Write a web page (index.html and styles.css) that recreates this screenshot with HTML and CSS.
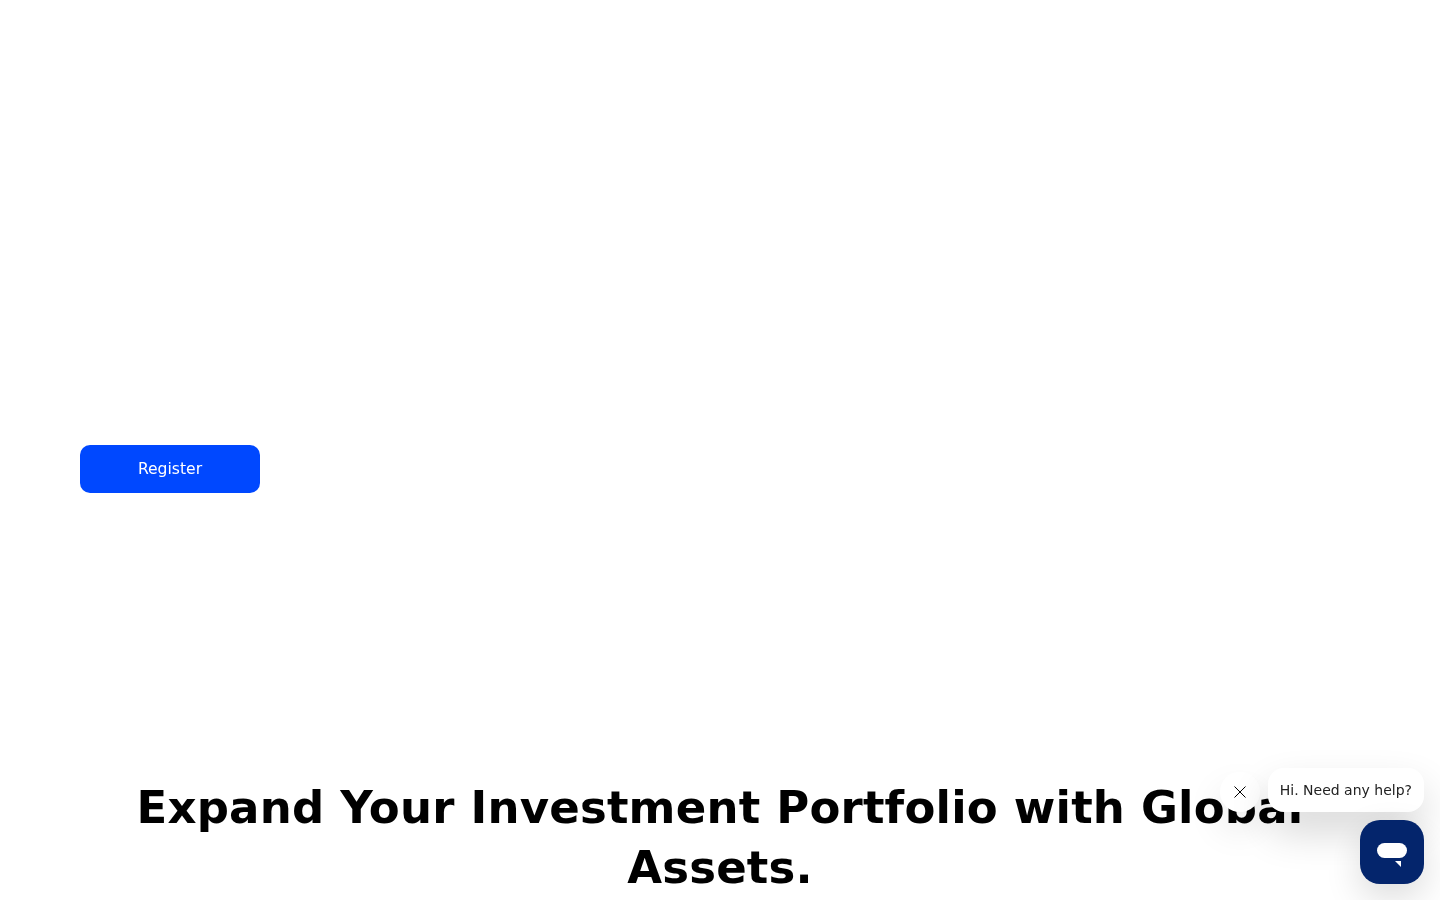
FILE: index.html
```html
<!DOCTYPE html>
<html lang="en">
<head>
<meta charset="utf-8">
<title>Expand Your Investment Portfolio</title>
<link rel="stylesheet" href="styles.css">
</head>
<body>
<main class="page">
  <section class="hero">
    <a class="register" href="#">Register</a>
  </section>
  <h1 class="headline">Expand Your Investment Portfolio with Global Assets.</h1>
</main>
<aside class="chat">
  <div class="chat-prompt">
    <button class="chat-close" aria-label="Close">
      <svg width="12" height="12" viewBox="0 0 12 12"><path d="M.5.5l11 11M11.500.5l-11 11" stroke="#000" stroke-width="1" fill="none"/></svg>
    </button>
    <div class="chat-bubble">Hi. Need any help?</div>
  </div>
  <button class="chat-launcher" aria-label="Open chat">
    <svg width="32" height="32" viewBox="0 0 32 32"><rect x="1" y="7" width="30" height="15" rx="7.500" fill="#fff"/><path d="M19 25h6v6z" fill="#fff"/></svg>
  </button>
</aside>
</body>
</html>
```
FILE: styles.css
```css
* { box-sizing: border-box; }
html, body { margin: 0; height: 900px; overflow: hidden; background: #fff; }
body { font-family: "DejaVu Sans", sans-serif; color: #000; }
.page { padding: 0 80px; }
.hero { height: 778px; padding-top: 445px; }
.register {
  display: flex; align-items: center; justify-content: center;
  width: 180px; height: 48px; padding-bottom: 1px;
  background: #0048ff; color: #fff;
  border-radius: 10px;
  font-size: 15.6px; text-decoration: none;
  will-change: transform;
}
.headline {
  margin: 0;
  font-size: 45px; line-height: 60px; font-weight: 700;
  letter-spacing: .2px;
  text-align: center;
  will-change: transform;
}
.chat {
  position: fixed; right: 16px; bottom: 16px;
  display: flex; flex-direction: column; align-items: flex-end; gap: 8px;
}
.chat-prompt { display: flex; align-items: center; gap: 8px; }
.chat-close {
  width: 40px; height: 40px; padding: 0; margin-top: 4px; border: 0; border-radius: 50%;
  background: #fff; display: flex; align-items: center; justify-content: center;
  box-shadow: 0 18px 36px rgba(0, 0, 0, .1);
}
.chat-bubble {
  height: 44px; padding: 0 12px; display: flex; align-items: center;
  background: #fff; border-radius: 16px;
  font-size: 14px; color: #222;
  box-shadow: 0 20px 40px rgba(0, 0, 0, .16);
}
.chat-launcher {
  width: 64px; height: 64px; padding: 0; border: 0; border-radius: 20px;
  background: #04256c; display: flex; align-items: center; justify-content: center;
  box-shadow: 0 14px 36px rgba(0, 0, 0, .14);
}
```
